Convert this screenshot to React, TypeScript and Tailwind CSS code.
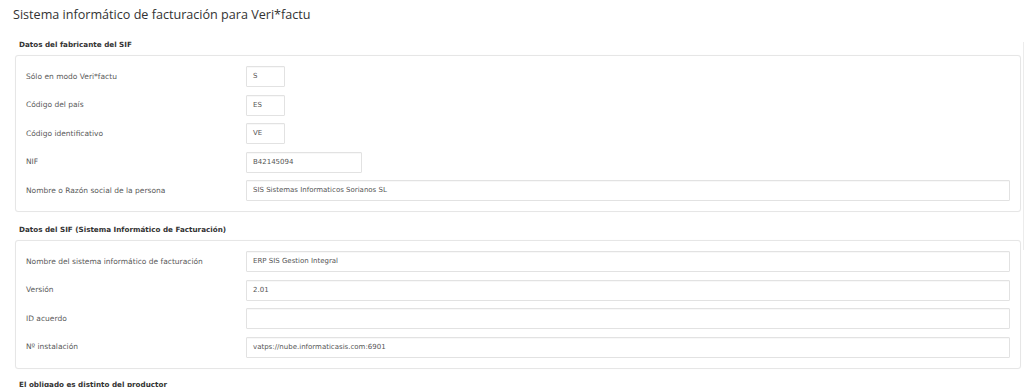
import React from "react";

type Field = { label: string; value: string; width: string };

const fabricante: Field[] = [
  { label: "Sólo en modo Veri*factu", value: "S", width: "w-[39px]" },
  { label: "Código del país", value: "ES", width: "w-[39px]" },
  { label: "Código identificativo", value: "VE", width: "w-[39px]" },
  { label: "NIF", value: "B42145094", width: "w-[116px]" },
  {
    label: "Nombre o Razón social de la persona",
    value: "SIS Sistemas Informaticos Sorianos SL",
    width: "w-[764px]",
  },
];

const sif: Field[] = [
  {
    label: "Nombre del sistema informático de facturación",
    value: "ERP SIS Gestion Integral",
    width: "w-[764px]",
  },
  { label: "Versión", value: "2.01", width: "w-[764px]" },
  { label: "ID acuerdo", value: "", width: "w-[764px]" },
  {
    label: "Nº instalación",
    value: "vatps://nube.informaticasis.com:6901",
    width: "w-[764px]",
  },
];

function Row({ field }: { field: Field }) {
  return (
    <div className="flex h-[21px] items-center">
      <span className="w-[220px] shrink-0 text-[7.5px] text-[#5a5a5a]">{field.label}</span>
      <div
        className={`${field.width} flex h-full items-center rounded-[1px] border border-[#e2e2e2] bg-white px-[6px] text-[7px] text-[#555] shadow-[inset_0_1px_1px_rgba(0,0,0,0.03)]`}
      >
        {field.value}
      </div>
    </div>
  );
}

function Section({
  title,
  fields,
  gap,
}: {
  title: string;
  fields: Field[];
  gap: string;
}) {
  return (
    <div>
      <h2 className="pl-[4px] text-[7.2px] font-bold leading-[10px] text-[#333]">{title}</h2>
      <div
        className={`mt-[5px] flex flex-col ${gap} rounded-[3px] border border-[#e6e6e6] bg-white pb-[10px] pl-[10px] pt-[10px] shadow-[0_0_1px_rgba(0,0,0,0.05)]`}
      >
        {fields.map((f) => (
          <Row key={f.label} field={f} />
        ))}
      </div>
    </div>
  );
}

export default function App() {
  return (
    <div
      className="relative h-[387px] w-[1024px] overflow-hidden bg-white"
      style={{ fontFamily: '"DejaVu Sans", Verdana, sans-serif' }}
    >
      <div className="absolute right-0 top-[42px] h-[208px] w-px bg-[#ececec]" />
      <div className="pl-[13px] pr-[3px] pt-[6px]">
        <h1
          className="text-[12.6px] font-normal leading-[18px] text-[#333]"
          style={{ fontFamily: '"Open Sans", sans-serif' }}
        >
          Sistema informático de facturación para Veri*factu
        </h1>
        <div className="ml-[2px] mt-[16px] flex flex-col gap-[13px]">
          <Section title="Datos del fabricante del SIF" fields={fabricante} gap="gap-[7.5px]" />
          <Section
            title="Datos del SIF (Sistema Informático de Facturación)"
            fields={sif}
            gap="gap-[7.5px]"
          />
          <h2 className="-mt-[2px] pl-[4px] text-[7.2px] font-bold leading-[10px] text-[#333]">
            El obligado es distinto del productor
          </h2>
        </div>
      </div>
    </div>
  );
}
